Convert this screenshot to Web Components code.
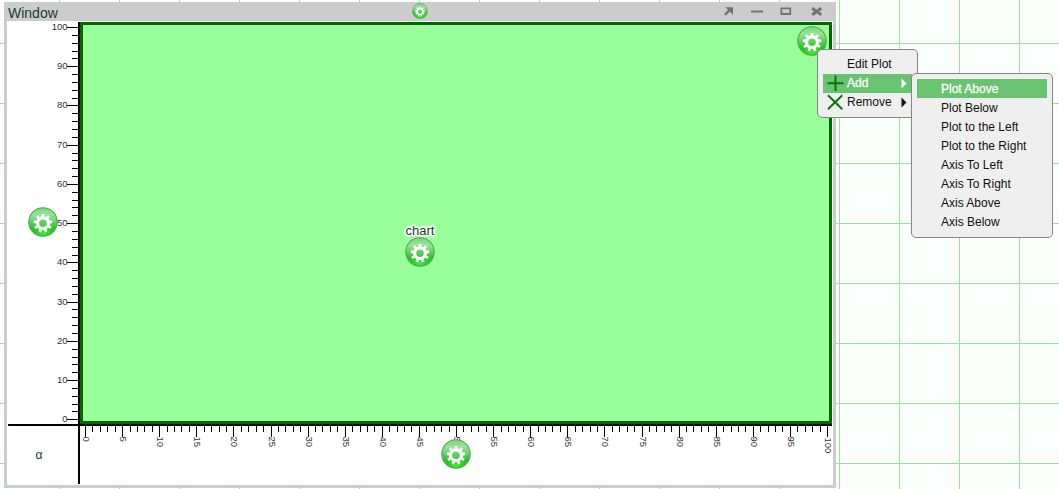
<!DOCTYPE html>
<html lang="en">
<head>
<meta charset="utf-8">
<title>Window</title>
<style>
html,body{margin:0;height:100%;overflow:hidden}
body{font-family:"Liberation Sans",Arial,sans-serif;font-size:12px;color:#111}
</style>
</head>
<body>
<grid-desktop>
  <chart-window heading="Window"></chart-window>
  <popup-menu style="left:817px;top:49px;width:101px;height:69px;--lift:2px">
    <menu-entry>Edit Plot</menu-entry>
    <menu-entry icon="add" sub active>Add</menu-entry>
    <menu-entry icon="remove" sub>Remove</menu-entry>
  </popup-menu>
  <popup-menu style="left:911px;top:73px;width:142px;height:165px">
    <menu-entry active>Plot Above</menu-entry>
    <menu-entry>Plot Below</menu-entry>
    <menu-entry>Plot to the Left</menu-entry>
    <menu-entry>Plot to the Right</menu-entry>
    <menu-entry>Axis To Left</menu-entry>
    <menu-entry>Axis To Right</menu-entry>
    <menu-entry>Axis Above</menu-entry>
    <menu-entry>Axis Below</menu-entry>
  </popup-menu>
</grid-desktop>
<script>
const define = (name, render) => customElements.define(name, class extends HTMLElement {
  connectedCallback() {
    if (this.shadowRoot) return;
    const t = document.createElement('template');
    t.innerHTML = render(this);
    this.attachShadow({mode: 'open'}).append(t.content);
  }
});

define('grid-desktop', () => `<style>
:host{display:block;position:relative;box-sizing:border-box;width:1059px;height:489px;padding:2px 0 0 4px;overflow:hidden;
background:linear-gradient(90deg,#9fdf9f 0 1px,rgba(159,223,159,0) 1px) 59px 0/60px 60px,linear-gradient(#9fdf9f 0 1px,rgba(159,223,159,0) 1px) 0 43px/60px 60px,#fbfffb}
</style><slot></slot>`);

// Cog outline with square teeth, centred on the origin.
function cog(outer, root, n) {
  const pts = [];
  for (let i = 0; i < n; i++) {
    const a = i * 2 * Math.PI / n + Math.PI / 2 + Math.PI / n, s = Math.PI * 2 / n;
    for (const [r, o] of [[root, -.29], [outer, -.21], [outer, .21], [root, .29]])
      pts.push((r * Math.cos(a + o * s)).toFixed(2) + ' ' + (r * Math.sin(a + o * s)).toFixed(2));
  }
  return 'M' + pts.join('L') + 'Z';
}

define('gear-button', () => `<style>
:host{display:block;width:30px;height:30px}svg{display:block;width:100%;height:100%}
</style><svg viewBox="0 0 30 30"><defs>
<linearGradient id="g" x1="0" y1="0" x2="0" y2="1"><stop offset="0" stop-color="#7fd47f"/><stop offset=".25" stop-color="#98e398"/><stop offset=".5" stop-color="#62cf62"/><stop offset=".75" stop-color="#20c020"/><stop offset="1" stop-color="#14b414"/></linearGradient>
<radialGradient id="b" cx=".5" cy="1" r=".5"><stop offset="0" stop-color="#3cf03c"/><stop offset="1" stop-color="#3cf03c" stop-opacity="0"/></radialGradient></defs>
<circle cx="15" cy="15" r="14.2" fill="url(#g)" stroke="#57a657" stroke-width="1.1"/>
<circle cx="15" cy="15" r="13.4" fill="url(#b)"/>
<path d="${cog(9.4, 7, 9)}M3.8 0A3.8 3.8 0 1 0 -3.8 0A3.8 3.8 0 1 0 3.8 0Z" fill="#fff" fill-rule="evenodd" transform="translate(15 16.2)"/></svg>`);

define('title-bar', () => `<style>
:host{display:flex;align-items:center;height:19px;box-sizing:border-box;padding:0 8px 0 4px;position:relative;color:#173c35;font-size:14px}
span{flex:1;line-height:19px;padding-top:3px}
gear-button{position:absolute;left:408px;top:1px;width:16px;height:16px}
svg{display:block;width:102px;height:12px;margin-bottom:2px}
</style><span><slot></slot></span><gear-button></gear-button>
<svg viewBox="0 0 102 12" fill="none" stroke="#747474" stroke-width="2.4"><path d="M1.9 9.8L7.5 4.2"/><path d="M2.2 2.2H10V9.8L7.7 7.4L4.7 4.5Z" fill="#747474" stroke="none"/><path d="M28 6.5H40" stroke-width="2"/><path d="M58.4 3.3H67.3V9H58.4Z" stroke-width="1.8"/><path d="M89.2 3.3L98.3 9.7M98.3 3.3L89.2 9.7" stroke-width="3"/></svg>`);

define('y-axis', () => {
  let m = '';
  for (let v = 0; v <= 100; v += 2) {
    const y = Math.round(397.3 - v * 3.923), big = v % 10 === 0;
    m += `<rect x="${big ? 59 : 64}" y="${y}" width="${big ? 11 : 6}" height="1"/>`;
    if (big) m += `<text x="59.6" y="${y + 3.3}" text-anchor="end">${v}</text>`;
  }
  return `<style>:host{display:block;position:relative}svg{display:block;overflow:visible;font-size:9.5px}text{fill:#333}gear-button{position:absolute;left:20px;top:185px}</style><svg width="70" height="402">${m}</svg><gear-button></gear-button>`;
});

define('x-axis', () => {
  let m = '';
  for (let v = 0; v <= 100; v++) {
    const x = Math.round(5 + v * 7.42), big = v % 5 === 0;
    m += `<rect x="${x}" y="0" width="1" height="${big ? 11 : 6}"/>`;
    if (big) m += `<text transform="translate(${x - 1.6} ${v === 100 ? 11.5 : 10.5}) rotate(90)">${v}</text>`;
  }
  return `<style>:host{display:block;position:relative}svg{display:block;overflow:visible;font-size:9.5px}text{fill:#333}gear-button{position:absolute;left:361px;top:13px}</style><svg width="752" height="58">${m}</svg><gear-button></gear-button>`;
});

define('plot-area', () => `<style>
:host{display:block;position:relative;box-sizing:border-box;border:3px solid #060;background:#9f9}
.tag{position:absolute;left:322px;top:198px;width:30px;display:flex;flex-direction:column;align-items:center;color:#123c22;font-size:13px;line-height:15px;
text-shadow:1px 0 #fff,-1px 0 #fff,0 1px #fff,0 -1px #fff,2px 0 1px #fff,-2px 0 1px #fff,0 2px 1px #fff,0 -2px 1px #fff,1px 1px #fff,-1px -1px #fff,1px -1px #fff,-1px 1px #fff}
.tag gear-button{margin-top:-1px}
.corner{position:absolute;left:714px;top:1px}
</style><div class="tag"><span>chart</span><gear-button></gear-button></div><gear-button class="corner"></gear-button>`);

define('chart-window', el => `<style>
:host{display:grid;grid-template-rows:19px 464px;width:832px;height:486px;box-sizing:border-box;padding:0 3px 3px;background:#ccc}
title-bar{margin-left:-3px}
.body{display:grid;box-sizing:border-box;padding:1px;background:#fff;grid-template-columns:70px 2px 752px;grid-template-rows:402px 2px 58px;border-radius:1px}
.v,.h{background:#000}.v{grid-column:2;grid-row:1/4}.h{grid-column:1/4;grid-row:2}
y-axis{grid-column:1;grid-row:1}plot-area{grid-column:3;grid-row:1}x-axis{grid-column:3;grid-row:3}
.alpha{grid-column:1;grid-row:3;display:flex;align-items:center;justify-content:center;font-size:12px;color:#173c35;padding:0 8px 0 0}
</style><title-bar>${el.getAttribute('heading')}</title-bar>
<div class="body"><y-axis></y-axis><plot-area></plot-area><div class="v"></div><div class="h"></div><div class="alpha">α</div><x-axis></x-axis></div>`);

define('menu-entry', el => {
  const icon = el.getAttribute('icon');
  return `<style>
:host{display:flex;align-items:center;height:19px;font-size:12px;color:#111}
:host([active]){background:#68c471;color:#fff;-webkit-text-stroke:.3px #fff}
.i{width:24px;height:19px;flex:none}span{flex:1;white-space:nowrap;padding-bottom:var(--lift,0)}svg{display:block}
</style><svg class="i" viewBox="0 0 24 19" fill="none" stroke="#0a760a" stroke-width="2">${icon === 'add' ? '<path d="M4.5 9.2H20.5M12.5 1.5V17"/>' : icon === 'remove' ? '<path d="M5 2.2L19.3 16.2M19.3 2.2L5 16.2"/>' : ''}</svg>
<span><slot></slot></span>${el.hasAttribute('sub') ? '<svg width="16" height="19"><path d="M5.5 4.5L10.5 9.5L5.5 14.5Z" fill="currentColor"/></svg>' : ''}`;
});

define('popup-menu', () => `<style>
:host{display:block;position:absolute;box-sizing:border-box;border:1px solid #868686;border-radius:5px;background:#efefef;padding:5px}
</style><slot></slot>`);
</script>
</body>
</html>
